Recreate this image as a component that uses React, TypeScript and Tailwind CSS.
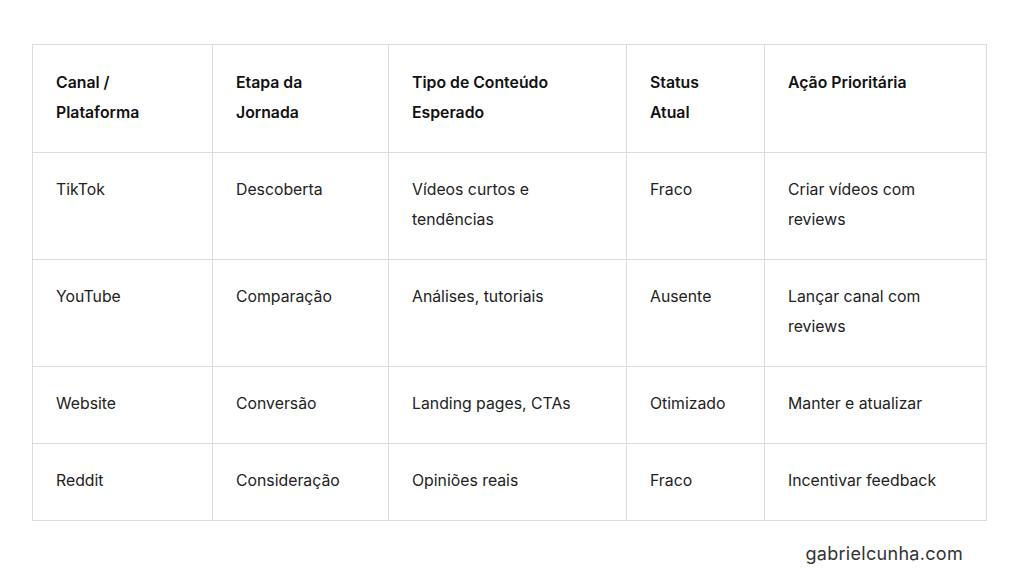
import React from "react";

const rows = [
  ["TikTok", "Descoberta", "Vídeos curtos e tendências", "Fraco", "Criar vídeos com reviews"],
  ["YouTube", "Comparação", "Análises, tutoriais", "Ausente", "Lançar canal com reviews"],
  ["Website", "Conversão", "Landing pages, CTAs", "Otimizado", "Manter e atualizar"],
  ["Reddit", "Consideração", "Opiniões reais", "Fraco", "Incentivar feedback"],
];

const headers = [
  ["Canal /", "Plataforma"],
  ["Etapa da", "Jornada"],
  ["Tipo de Conteúdo", "Esperado"],
  ["Status", "Atual"],
  ["Ação Prioritária"],
];
const widths = ["w-[180px]", "w-[176px]", "w-[238px]", "w-[138px]", "w-[222px]"];

const App = () => {
  return (
    <div className="w-[1024px] h-[573px] bg-white font-['Inter',sans-serif] text-[#222] flex flex-col">
      <div className="pt-[44px] pl-[32px]">
        <table className="table-fixed border-collapse w-[954px] text-[15.8px] leading-[30px]">
          <colgroup>
            {widths.map((w, i) => (
              <col key={i} className={w} />
            ))}
          </colgroup>
          <thead>
            <tr>
              {headers.map((h, i) => (
                <th
                  key={i}
                  className="border border-[#dcdcdc] text-left align-top font-semibold px-[23px] pt-[23px] pb-[24px] text-[#111]"
                >
                  {h.map((line, li) => (
                    <div key={li}>{line}</div>
                  ))}
                </th>
              ))}
            </tr>
          </thead>
          <tbody>
            {rows.map((r, ri) => (
              <tr key={ri}>
                {r.map((c, ci) => (
                  <td key={ci} className="border border-[#dcdcdc] align-top px-[23px] pt-[22px] pb-[24px]">
                    {c}
                  </td>
                ))}
              </tr>
            ))}
          </tbody>
        </table>
      </div>
      <div className="flex justify-end pr-[61px] pt-[19px]">
        <span className="text-[18px] text-[#333] tracking-[0.3px]">gabrielcunha.com</span>
      </div>
    </div>
  );
};

export default App;
